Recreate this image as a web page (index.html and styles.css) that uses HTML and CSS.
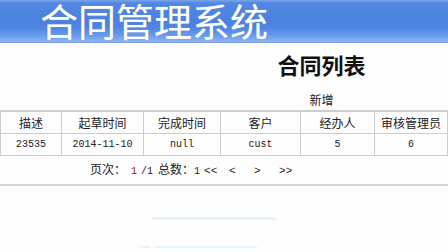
FILE: index.html
```html
<!DOCTYPE html>
<html>
<head>
    <title>合同管理系统</title>
    <link rel="stylesheet" href="styles.css">
</head>
<body>
    <div class="banner"><span class="banner_t">合同管理系统</span></div>
    <div class="heading">合同列表</div>
    <div class="add_c"><a class="add" href="#">新增</a></div>
    <table class="liste">
        <colgroup>
            <col style="width: 61px;"><col style="width: 82px;"><col style="width: 77px;">
            <col style="width: 80px;"><col style="width: 74px;"><col>
        </colgroup>
        <thead>
            <tr>
                <th>描述</th>
                <th>起草时间</th>
                <th>完成时间</th>
                <th>客户</th>
                <th>经办人</th>
                <th>审核管理员</th>
            </tr>
        </thead>
        <tbody>
            <tr>
                <td class="num">23535</td>
                <td class="num">2014-11-10</td>
                <td class="num">null</td>
                <td class="num">cust</td>
                <td class="num">5</td>
                <td class="num">6</td>
            </tr>
        </tbody>
    </table>
    <div class="pager">
        <span class="lbl">页次：</span><span class="num cur">1</span><span class="num">/1</span><span class="lbl tot">总数：</span><span class="num">1</span><span class="nav first">&lt;&lt;</span><span class="nav">&lt;</span><span class="nav">&gt;</span><span class="nav">&gt;&gt;</span>
    </div>
    <div class="rule"></div>
    <div class="ghost ghost_a"></div>
    <div class="ghost_row"><div class="ghost ghost_b1"></div><div class="ghost ghost_b2"></div></div>
</body>
</html>
```

FILE: styles.css
```css
body { margin: 0; font-family: "Noto Sans CJK SC", sans-serif; font-size: 12px; color: #222; background: #fdfdfd; }
.banner { height: 42px; border-bottom: 1px solid #7f9fd6;
    background: linear-gradient(to bottom, #7ba5ea 0px, #5188e2 3px, #4a80e0 22px, #4f86e3 28px, #6a9cee 36px, #8cb6f5 42px); }
.banner_t { display: block; height: 42px; padding-left: 40px; font-size: 38px; line-height: 40px; color: #fff; text-shadow: 0 0 1px #8aa; }
.heading { margin-top: 7px; padding-left: 195px; text-align: center; font-size: 22px; font-weight: bold; line-height: 28px; color: #111; }
.add_c { margin-top: 14px; padding-left: 195px; text-align: center; line-height: 16px; }
.add { color: #222; text-decoration: none; font-size: 12px; }
.liste { margin-top: 2px; width: 448px; table-layout: fixed; border-collapse: collapse; }
.liste th, .liste td { border: 1px solid #cdcdcd; height: 21px; padding: 0; text-align: center; font-weight: normal; color: #222; }
.liste thead th { border-top-width: 2px; }
.num { font-family: "Liberation Mono", monospace; font-size: 10px; }
.pager { display: flex; align-items: baseline; margin-top: 5px; padding-left: 90px; line-height: 16px; color: #222; }
.cur { color: #a01010; margin-left: 5px; margin-right: 4px; }
.tot { margin-left: 5px; }
.nav { display: inline-block; width: 25px; font-family: "Liberation Mono", monospace; font-size: 11px; }
.nav.first { margin-left: 4px; }
.rule { margin-top: 4px; height: 2px; background: #d4d4d4; }
.ghost { height: 3px; background: #e4f3fd; }
.ghost_a { margin: 31px 0 0 152px; width: 124px; }
.ghost_row { display: flex; margin-top: 26px; }
.ghost_b1 { margin-left: 140px; width: 10px; height: 2px; }
.ghost_b2 { margin-left: 5px; width: 102px; height: 2px; }
```
